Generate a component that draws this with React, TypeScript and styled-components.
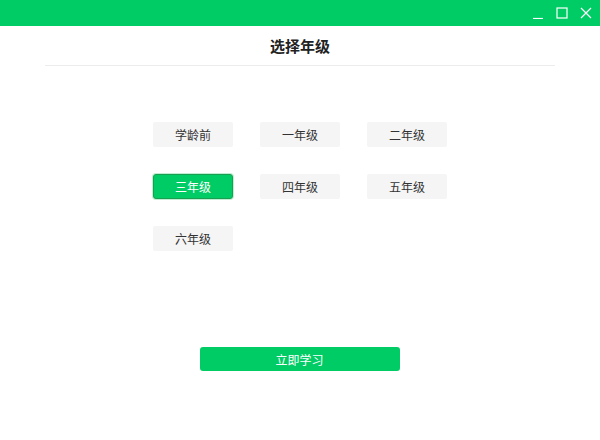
import { useState } from 'react';
import styled, { createGlobalStyle } from 'styled-components';

const GREEN = '#00cc66';

const grades = ['学龄前', '一年级', '二年级', '三年级', '四年级', '五年级', '六年级'];

const GlobalStyle = createGlobalStyle`
  html, body {
    margin: 0;
    padding: 0;
    background: #ffffff;
  }
  body {
    font-family: "Noto Sans CJK SC", "Noto Sans", sans-serif;
  }
`;

function App() {
  const [selected, setSelected] = useState('三年级');

  return (
    <Window>
      <GlobalStyle />
      <TitleBar>
        <Controls>
          <ControlButton aria-label="minimize">
            <svg width="12" height="12" viewBox="0 0 12 12">
              <path d="M1 11.5h10" stroke="#fff" strokeWidth="1.2" />
            </svg>
          </ControlButton>
          <ControlButton aria-label="maximize">
            <svg width="12" height="12" viewBox="0 0 12 12">
              <rect x="1" y="1" width="10" height="10" fill="none" stroke="#fff" strokeWidth="1.2" />
            </svg>
          </ControlButton>
          <ControlButton aria-label="close">
            <svg width="12" height="12" viewBox="0 0 12 12">
              <path d="M1 1l10 10M11 1L1 11" stroke="#fff" strokeWidth="1.2" />
            </svg>
          </ControlButton>
        </Controls>
      </TitleBar>

      <Header>
        <Title>选择年级</Title>
      </Header>

      <GradeGrid>
        {grades.map((g) => (
          <GradeButton key={g} $active={g === selected} onClick={() => setSelected(g)}>
            {g}
          </GradeButton>
        ))}
      </GradeGrid>

      <Footer>
        <StartButton>立即学习</StartButton>
      </Footer>
    </Window>
  );
}

const Window = styled.div`
  width: 600px;
  height: 440px;
  display: flex;
  flex-direction: column;
  background: #fff;
  overflow: hidden;
`;

const TitleBar = styled.div`
  height: 26px;
  background: ${GREEN};
  display: flex;
  justify-content: flex-end;
  align-items: center;
`;

const Controls = styled.div`
  display: flex;
  align-items: center;
  gap: 12px;
  padding-right: 8px;
`;

const ControlButton = styled.button`
  border: none;
  background: transparent;
  padding: 0;
  width: 12px;
  height: 12px;
  display: flex;
  cursor: pointer;
`;

const Header = styled.div`
  margin: 0 45px;
  height: 39px;
  border-bottom: 1px solid #ececec;
  display: flex;
  align-items: center;
  justify-content: center;
`;

const Title = styled.h1`
  margin: 0;
  font-size: 15px;
  font-weight: 700;
  color: #222;
  line-height: 1;
`;

const GradeGrid = styled.div`
  display: grid;
  grid-template-columns: repeat(3, 80px);
  grid-auto-rows: 25px;
  column-gap: 27px;
  row-gap: 27px;
  margin: 56px 0 0 153px;
`;

const GradeButton = styled.button<{ $active?: boolean }>`
  border: ${(p) => (p.$active ? '1px solid #1a9e50' : 'none')};
  border-radius: ${(p) => (p.$active ? '3px' : '2px')};
  background: ${(p) => (p.$active ? GREEN : '#f5f5f5')};
  color: ${(p) => (p.$active ? '#fff' : '#333')};
  box-shadow: ${(p) => (p.$active ? '0 0 0 1px #bfeed3' : 'none')};
  font-family: inherit;
  font-size: 12px;
  padding: 0;
  cursor: pointer;
`;

const Footer = styled.div`
  display: flex;
  justify-content: center;
  margin-top: 96px;
`;

const StartButton = styled.button`
  width: 200px;
  height: 24px;
  margin-left: -1px;
  border: none;
  border-radius: 3px;
  background: ${GREEN};
  color: #fff;
  font-family: inherit;
  font-size: 12px;
  cursor: pointer;
`;

export default App;
